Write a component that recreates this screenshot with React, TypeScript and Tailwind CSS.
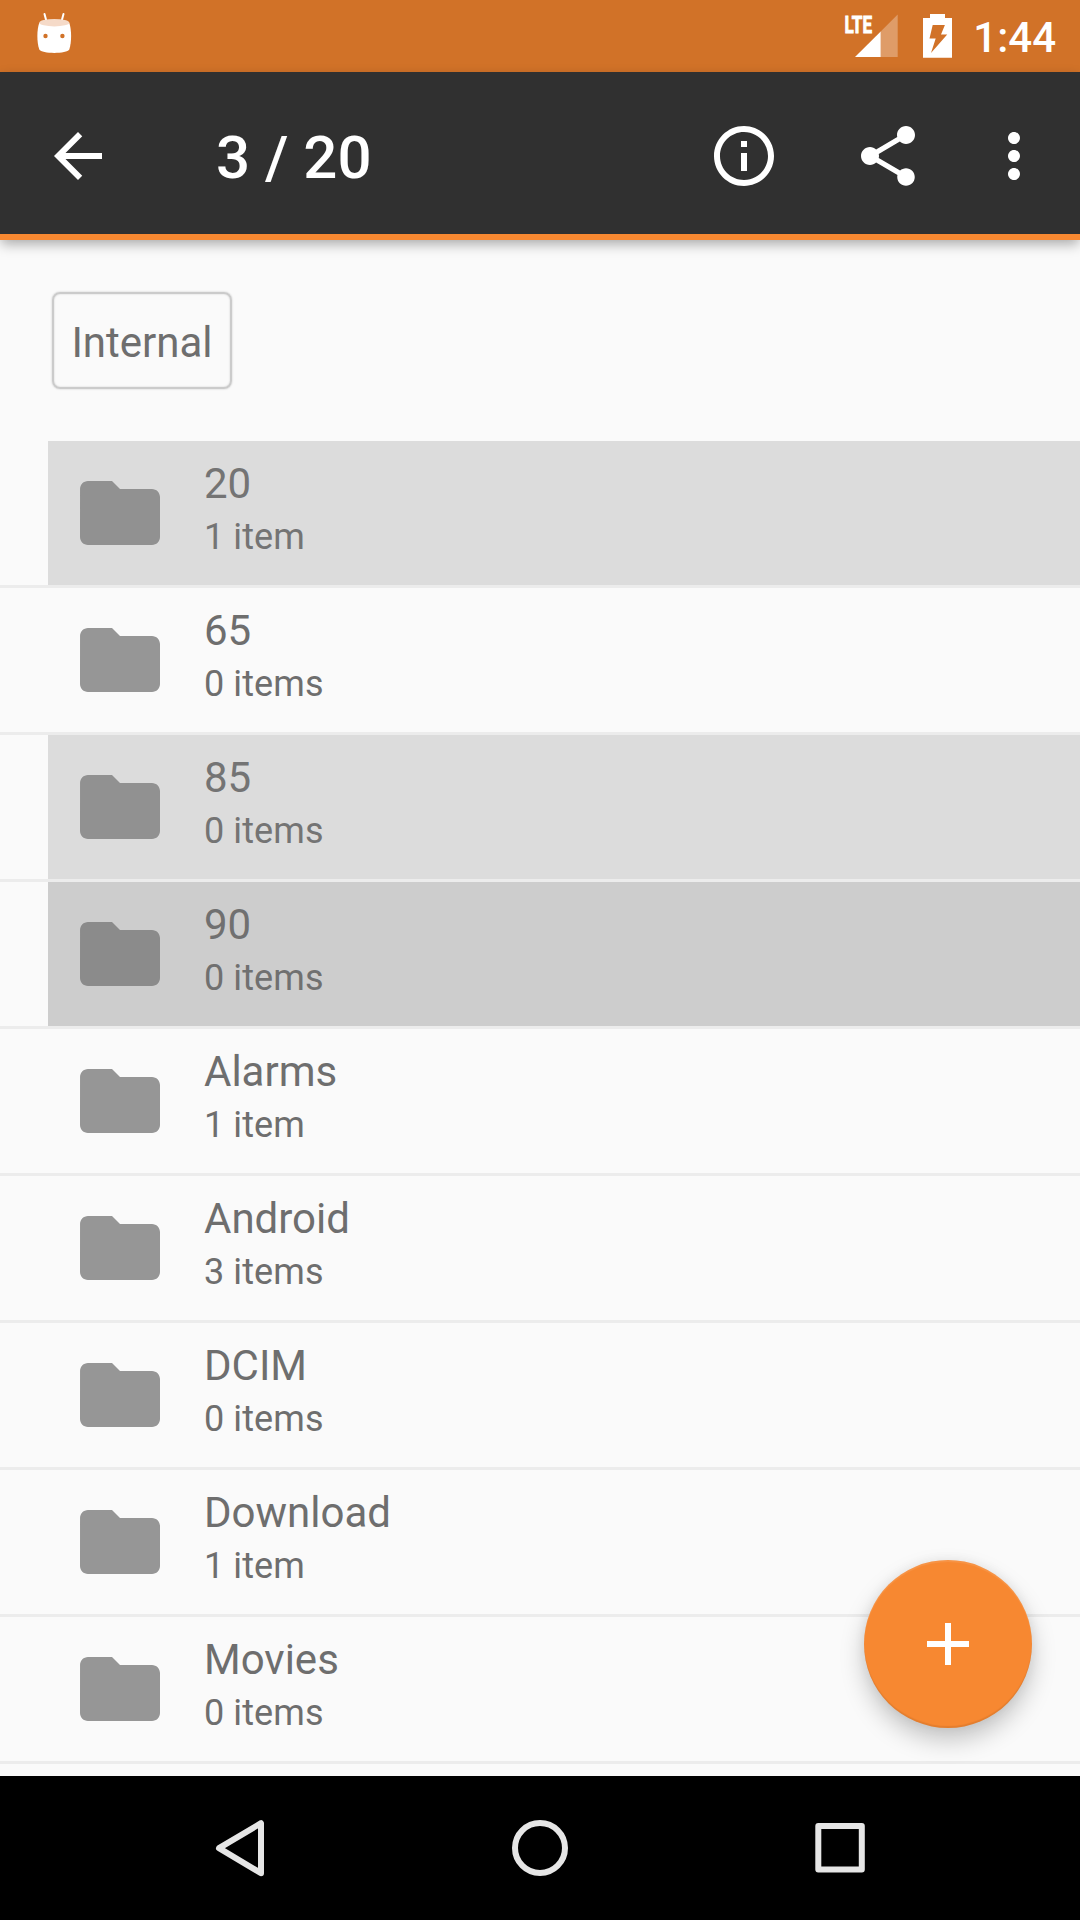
import React from "react";

type Tone = "none" | "selected" | "pressed";

const folders: { name: string; count: string; tone: Tone }[] = [
  { name: "20", count: "1 item", tone: "selected" },
  { name: "65", count: "0 items", tone: "none" },
  { name: "85", count: "0 items", tone: "selected" },
  { name: "90", count: "0 items", tone: "pressed" },
  { name: "Alarms", count: "1 item", tone: "none" },
  { name: "Android", count: "3 items", tone: "none" },
  { name: "DCIM", count: "0 items", tone: "none" },
  { name: "Download", count: "1 item", tone: "none" },
  { name: "Movies", count: "0 items", tone: "none" },
];

const rowTone: Record<Tone, string> = {
  none: "text-[#6e6e6e]",
  selected: "bg-[#dcdcdc] text-[#747474]",
  pressed: "bg-[#cdcdcd] text-[#707070]",
};

const folderTone: Record<Tone, string> = {
  none: "text-[#969696]",
  selected: "text-[#919191]",
  pressed: "text-[#8b8b8b]",
};

function Icon({ d, className }: { d: string; className: string }) {
  return (
    <svg viewBox="0 0 24 24" fill="currentColor" className={className}>
      <path d={d} />
    </svg>
  );
}

function StatusBar() {
  return (
    <div className="flex h-[72px] shrink-0 items-start bg-[#d17228] text-white">
      <svg viewBox="0 0 36 44" className="mt-[11px] ml-9 h-11 w-9">
        <path d="M8.500 3 L10.500 10.500 M27.500 3 L25.500 10.500" stroke="white" strokeWidth="2" strokeLinecap="round" />
        <path d="M3.300 11.700 H33.300 C35.700 19 35.700 31 33.300 38.500 C31 43 5.500 43 3.300 38.500 C0.700 31 0.700 19 3.300 11.700Z" fill="white" />
        <ellipse cx="18.300" cy="11.700" rx="15" ry="3.700" fill="#f5dac8" />
        <circle cx="9.500" cy="25" r="2.200" fill="#d17228" />
        <circle cx="26.400" cy="25" r="2.200" fill="#d17228" />
      </svg>
      <svg viewBox="0 0 60 48" className="mt-3 ml-auto h-12 w-[60px] overflow-visible">
        <text x="4.500" y="21" fill="white" stroke="white" strokeWidth="0.900" fontFamily="Roboto" fontWeight="700" fontSize="24.500" textLength="27.500" lengthAdjust="spacingAndGlyphs">LTE</text>
        <path d="M57.700 2.500V45H40.700V19.500Z" fill="white" fillOpacity=".3" />
        <path d="M40.700 19.500V45H15Z" fill="white" />
      </svg>
      <svg viewBox="0 0 29 44" className="mt-3.5 ml-[23px] h-11 w-[29px]">
        <path d="M7 0H22V4H29V43.700H0V4H7Z" fill="white" />
        <path d="M9.700 11H21.900L18 20.500H24.200L8 39L12.700 24.500H6.500Z" fill="#d17228" />
      </svg>
      <span className="mt-[13px] mr-6 ml-5 w-[84px] text-right text-[42px] leading-[49px] font-medium">1:44</span>
    </div>
  );
}

function Toolbar() {
  return (
    <div className="relative z-10 flex h-[168px] shrink-0 items-start border-b-[6px] border-[#f78831] bg-[#303030] pt-12 pr-[30px] pl-[42px] text-white shadow-[0_5px_12px_-1px_rgba(0,0,0,0.33)]">
      <Icon className="size-[72px]" d="M20 11H7.830l5.590-5.590L12 4l-8 8 8 8 1.410-1.410L7.830 13H20v-2z" />
      <h1 className="mt-[3px] ml-[102px] text-[60px] leading-[70px] font-medium">3 / 20</h1>
      <Icon className="ml-auto size-[72px]" d="M11 17h2v-6h-2v6zm1-15C6.480 2 2 6.480 2 12s4.480 10 10 10 10-4.480 10-10S17.520 2 12 2zm0 18c-4.410 0-8-3.590-8-8s3.590-8 8-8 8 3.590 8 8-3.590 8-8 8zM11 9h2V7h-2v2z" />
      <Icon className="ml-[72px] size-[72px]" d="M18 16.080c-.76 0-1.440.3-1.960.77L8.910 12.700c.05-.23.09-.46.09-.7s-.04-.47-.09-.7l7.050-4.110c.54.5 1.250.81 2.040.81 1.660 0 3-1.340 3-3s-1.340-3-3-3-3 1.340-3 3c0 .24.04.47.09.7L8.040 9.810C7.500 9.310 6.790 9 6 9c-1.660 0-3 1.340-3 3s1.340 3 3 3c.79 0 1.500-.31 2.040-.81l7.120 4.160c-.05.21-.08.43-.08.65 0 1.610 1.310 2.920 2.920 2.920 1.610 0 2.920-1.310 2.920-2.920s-1.310-2.920-2.920-2.920z" />
      <Icon className="ml-[54px] size-[72px]" d="M12 8c1.100 0 2-.9 2-2s-.9-2-2-2-2 .9-2 2 .9 2 2 2zm0 2c-1.100 0-2 .9-2 2s.9 2 2 2 2-.9 2-2-.9-2-2-2zm0 6c-1.100 0-2 .9-2 2s.9 2 2 2 2-.9 2-2-.9-2-2-2z" />
    </div>
  );
}

function FolderRow({ name, count, tone }: { name: string; count: string; tone: Tone }) {
  return (
    <li className="h-[147px] border-b-[3px] border-[#ececec] pl-12">
      <div className={`flex h-36 items-start pl-6 ${rowTone[tone]}`}>
        <Icon
          className={`mt-6 size-24 ${folderTone[tone]}`}
          d="M10 4H4c-1.100 0-1.990.9-1.990 2L2 18c0 1.100.9 2 2 2h16c1.100 0 2-.9 2-2V8c0-1.100-.9-2-2-2h-8l-2-2z"
        />
        <div className="mt-[18px] ml-9 flex flex-col gap-2">
          <span className="text-[42px] leading-[49px]">{name}</span>
          <span className="text-[36px] leading-[42px] tracking-[0.1px]">{count}</span>
        </div>
      </div>
    </li>
  );
}

function NavigationBar() {
  return (
    <div className="relative z-10 flex h-36 shrink-0 items-center justify-between bg-black px-[210px]">
      <svg viewBox="0 0 60 60" fill="none" stroke="#e6e6e6" strokeWidth="6" strokeLinejoin="round" className="size-[60px]">
        <path d="M9 30.200 L51 5.200 V55.200Z" />
      </svg>
      <svg viewBox="0 0 60 60" fill="none" stroke="#e6e6e6" strokeWidth="6" className="size-[60px]">
        <circle cx="30" cy="30" r="25" />
      </svg>
      <svg viewBox="0 0 60 60" fill="none" stroke="#e6e6e6" strokeWidth="6" strokeLinejoin="round" className="size-[60px]">
        <rect x="8.300" y="8" width="43.500" height="43.500" />
      </svg>
    </div>
  );
}

export default function App() {
  return (
    <div className="flex h-[1920px] w-[1080px] flex-col overflow-hidden bg-[#fafafa] font-['Roboto',sans-serif]">
      <StatusBar />
      <Toolbar />
      <main className="relative min-h-0 flex-1 overflow-hidden">
        <div className="flex h-[201px] items-start pt-[52px] pl-[52px]">
          <button className="h-[97px] w-[180px] rounded-[8px] border-2 border-[#cbcbcb] pt-[3px] text-[42px] leading-[49px] text-[#6e6e6e] shadow-[0_0_2px_rgba(0,0,0,0.22),inset_0_0_2px_rgba(0,0,0,0.18)]">
            Internal
          </button>
        </div>
        <ul>
          {folders.map((folder) => (
            <FolderRow key={folder.name} {...folder} />
          ))}
        </ul>
        <button
          aria-label="Add"
          className="absolute right-12 bottom-12 flex size-[168px] items-center justify-center rounded-full bg-[#f78831] text-white shadow-[0_12px_24px_rgba(0,0,0,0.22),0_0_12px_rgba(0,0,0,0.06),inset_0_-2px_1px_rgba(0,0,0,0.08),inset_0_2px_1px_rgba(255,255,255,0.1)]"
        >
          <Icon className="size-[72px]" d="M19 13h-6v6h-2v-6H5v-2h6V5h2v6h6v2z" />
        </button>
      </main>
      <NavigationBar />
    </div>
  );
}
